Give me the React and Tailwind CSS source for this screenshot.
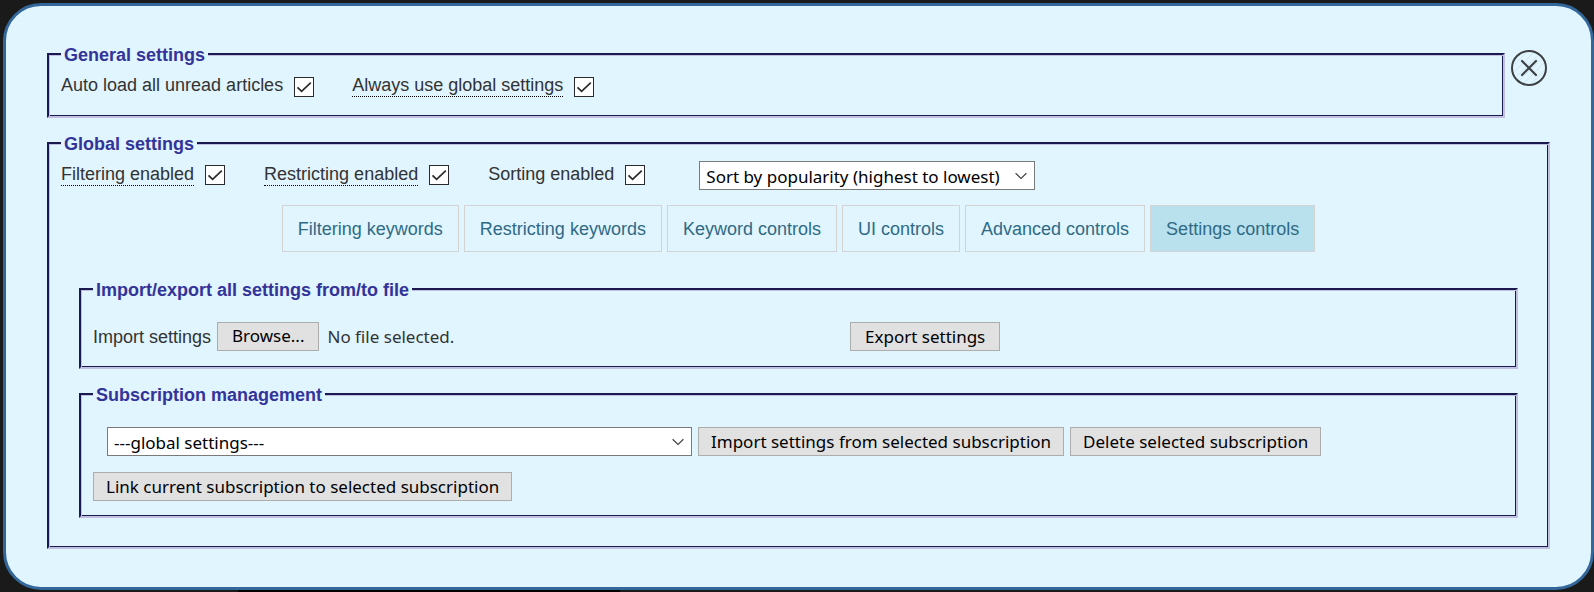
import { useState } from "react";

function Panel({ title, className, children }) {
  return (
    <fieldset
      className={`min-w-0 border-2 border-t-[#1a1a50] border-l-[#1a1a50] border-r-[#c2c0e0] border-b-[#c2c0e0] px-3 shadow-[inset_1px_1px_0_#c2c0e0,inset_-1px_-1px_0_#1a1a50] ${className}`}
    >
      <legend className="bg-[#e0f5ff] px-[3px] pt-[2px] leading-[18px] font-bold text-[#333399]">
        {title}
      </legend>
      {children}
    </fieldset>
  );
}

function Check({ id, label, hint, align = "items-center" }) {
  return (
    <div className={`flex gap-[11px] ${align}`}>
      <label
        htmlFor={id}
        title={hint}
        className={`border-b border-dotted pb-px leading-5 ${hint ? "border-black" : "border-transparent"}`}
      >
        {label}
      </label>
      <span className="grid size-5 *:[grid-area:1/1]">
        <input
          id={id}
          type="checkbox"
          defaultChecked
          className="peer size-5 appearance-none border border-[#2a2a2e] bg-white"
        />
        <svg
          viewBox="0 0 20 20"
          className="pointer-events-none size-5 opacity-0 peer-checked:opacity-100"
          fill="none"
          stroke="#2a2a2e"
          strokeWidth="1.7"
        >
          <path d="M3.5 10.4 L7.6 14.4 L16.8 5.6" />
        </svg>
      </span>
    </div>
  );
}

function Select({ label, className, options }) {
  return (
    <span className={`grid h-7 *:[grid-area:1/1] ${className}`}>
      <select
        aria-label={label}
        className="w-full appearance-none border border-[#7a7a7a] bg-white pt-[3px] pr-8 pl-[6px] font-['Noto_Sans',sans-serif] text-[17px] leading-6 text-black"
      >
        {options.map((o) => (
          <option key={o}>{o}</option>
        ))}
      </select>
      <svg
        viewBox="0 0 12 8"
        className="pointer-events-none mr-2 h-2 w-3 self-center justify-self-end"
        fill="none"
        stroke="#444"
        strokeWidth="1.2"
      >
        <path d="M0.6 1.2 L6 6.4 L11.4 1.2" />
      </svg>
    </span>
  );
}

const buttonStyle =
  "block h-[29px] border border-[#adadad] bg-[#e1e1e1] pt-px font-['Noto_Sans',sans-serif] text-[17px] leading-6 whitespace-nowrap text-black";

const tabs = [
  "Filtering keywords",
  "Restricting keywords",
  "Keyword controls",
  "UI controls",
  "Advanced controls",
  "Settings controls",
];

export default function App() {
  const [tab, setTab] = useState("Settings controls");
  return (
    <div className="flex min-h-screen flex-col bg-[#1a1a1a] pt-[3px] pl-[3px] font-['Liberation_Sans',Arial,sans-serif] text-[18px] text-[#333]">
      <main className="flex-1 rounded-[38px] border-3 border-[#336699] bg-[#e0f5ff] px-[41px] py-[38px]">
        <div className="flex items-start gap-[6px]">
          <Panel title="General settings" className="flex-1 pt-[11px] pb-[19px]">
            <div className="flex flex-wrap gap-x-[38px]">
              <Check id="auto" label="Auto load all unread articles" align="items-end" />
              <Check
                id="always"
                label="Always use global settings"
                hint="Use the global settings for every subscription"
                align="items-end"
              />
            </div>
          </Panel>
          <button type="button" aria-label="Close" className="mt-[6px] mr-[3px]">
            <svg viewBox="0 0 36 36" className="size-9" fill="none" stroke="#3c4043" strokeLinecap="round">
              <path
                d="M4 14 L14 4 M3 22 L22 3 M6 26 L26 6 M8 31 L31 8 M13 33 L33 13 M20 34 L34 20"
                stroke="#cfe6f0"
                strokeWidth="1"
              />
              <circle cx="18" cy="18" r="17" strokeWidth="2" />
              <path d="M11 11 L25 25 M25 11 L11 25" strokeWidth="2.2" />
            </svg>
          </button>
        </div>

        <Panel title="Global settings" className="mt-[15px] pt-2 pb-[29px]">
          <div className="flex flex-wrap items-center gap-x-[39px]">
            <Check id="filtering" label="Filtering enabled" hint="Filter articles by keyword" />
            <Check id="restricting" label="Restricting enabled" hint="Show only matching articles" />
            <Check id="sorting" label="Sorting enabled" />
            <Select
              label="Sort by"
              className="ml-[15px] w-[336px]"
              options={["Sort by popularity (highest to lowest)", "Sort by popularity (lowest to highest)"]}
            />
          </div>

          <div role="tablist" className="mt-4 flex flex-wrap justify-center gap-[5px]">
            {tabs.map((t) => (
              <button
                key={t}
                type="button"
                role="tab"
                aria-selected={t === tab}
                onClick={() => setTab(t)}
                className={`h-[47px] border border-[#d3d3d3] px-[15px] pt-[2px] text-[#2f6a85] ${
                  t === tab ? "bg-[#b8e0ed]" : ""
                }`}
              >
                {t}
              </button>
            ))}
          </div>

          <div className="mx-[18px] mt-[27px] flex flex-col gap-[15px]">
            <Panel title="Import/export all settings from/to file" className="pt-[23px] pb-4">
              <div className="flex items-center">
                <div className="flex w-[757px] items-center">
                  <label htmlFor="file" className="mr-[6px] pt-[2px]">
                    Import settings
                  </label>
                  <input id="file" type="file" className="sr-only" />
                  <label htmlFor="file" className={`${buttonStyle} px-[14px]`}>
                    Browse...
                  </label>
                  <span className="ml-2 font-['Noto_Sans',sans-serif] text-[17px] leading-6">
                    No file selected.
                  </span>
                </div>
                <button type="button" className={`${buttonStyle} px-[14px]`}>
                  Export settings
                </button>
              </div>
            </Panel>

            <Panel title="Subscription management" className="pt-[23px] pb-[15px]">
              <div className="flex flex-wrap items-start gap-x-[6px] gap-y-4">
                <Select
                  label="Subscription"
                  className="ml-[14px] w-[585px]"
                  options={["---global settings---"]}
                />
                <button type="button" className={`${buttonStyle} px-3`}>
                  Import settings from selected subscription
                </button>
                <button type="button" className={`${buttonStyle} px-3`}>
                  Delete selected subscription
                </button>
                <button type="button" className={`${buttonStyle} px-3`}>
                  Link current subscription to selected subscription
                </button>
              </div>
            </Panel>
          </div>
        </Panel>
      </main>
      <div className="ml-[235px] h-[2px] w-[382px] bg-black" />
    </div>
  );
}
